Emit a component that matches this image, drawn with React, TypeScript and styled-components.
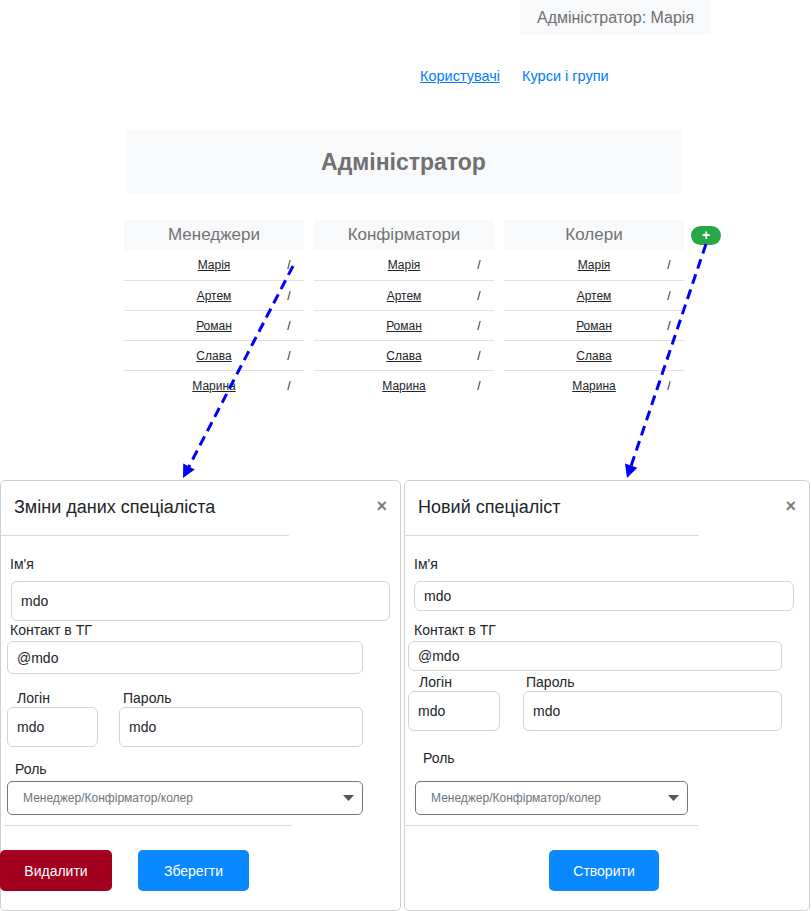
import React from "react";
import styled, { createGlobalStyle } from "styled-components";

const GlobalStyle = createGlobalStyle`
  html, body { margin: 0; padding: 0; background: #fff; }
  body { font-family: "Liberation Sans", Arial, Helvetica, sans-serif; color: #212529; }
  * { box-sizing: border-box; }
`;

const Page = styled.div`
  position: relative;
  width: 811px;
  height: 911px;
  overflow: hidden;
`;

const TopBar = styled.div`
  display: flex;
  justify-content: flex-end;
  padding-right: 100px;
`;

const UserBadge = styled.div`
  width: 191px;
  height: 35px;
  line-height: 35px;
  text-align: center;
  background: #f8f9fa;
  color: #707070;
  font-size: 16px;
`;

const Nav = styled.nav`
  display: flex;
  gap: 22px;
  margin-top: 31px;
  padding-left: 420px;
  font-size: 14.5px;
  line-height: 20px;
`;

const NavLink = styled.a<{ $active?: boolean }>`
  color: #007bff;
  cursor: pointer;
  text-decoration: ${(p) => (p.$active ? "underline" : "none")};
`;

const TitleBox = styled.div`
  margin: 44px 0 0 126px;
  width: 555px;
  height: 64px;
  display: flex;
  align-items: center;
  justify-content: center;
  background: #f8f9fa;
  color: #707070;
  font-size: 23px;
  font-weight: bold;
`;

const Columns = styled.div`
  display: flex;
  align-items: flex-start;
  gap: 10px;
  margin-top: 26px;
  padding-left: 124px;
`;

const Column = styled.div`
  width: 180px;
`;

const ColumnHeader = styled.div`
  height: 30px;
  line-height: 30px;
  text-align: center;
  background: #f8f9fa;
  color: #737373;
  font-size: 17px;
`;

const PersonRow = styled.div`
  display: grid;
  grid-template-columns: 30px 1fr 30px;
  align-items: center;
  height: 30px;
  font-size: 12px;
  color: #212529;
  & + & {
    border-top: 1px solid #dee2e6;
  }
`;

const PersonName = styled.a`
  grid-column: 2;
  text-align: center;
  color: #212529;
  text-decoration: underline;
`;

const Slash = styled.span`
  grid-column: 3;
  text-align: center;
`;

const AddButton = styled.button`
  margin: 6px 0 0 -3px;
  width: 30px;
  height: 19px;
  padding: 0;
  border: none;
  border-radius: 10px;
  background: #28a745;
  color: #fff;
  font-family: inherit;
  font-size: 14px;
  font-weight: bold;
  line-height: 19px;
`;

const ModalsRow = styled.div`
  display: flex;
  gap: 3px;
  margin-top: 80px;
`;

const ModalCard = styled.div<{ $w: number }>`
  width: ${(p) => p.$w}px;
  height: 431px;
  border: 1px solid #cfcfcf;
  border-radius: 5px;
  background: #fff;
  display: flex;
  flex-direction: column;
  align-items: flex-start;
`;

const ModalHeader = styled.div`
  align-self: stretch;
  height: 54px;
  padding: 15px 13px 0 13px;
  display: flex;
  justify-content: space-between;
  align-items: flex-start;
`;

const ModalTitle = styled.h5`
  margin: 0;
  font-size: 18px;
  font-weight: normal;
  line-height: 22px;
  color: #212529;
`;

const CloseButton = styled.button`
  padding: 0;
  border: none;
  background: none;
  font-family: inherit;
  font-size: 18px;
  font-weight: bold;
  line-height: 20px;
  color: #7d7d7d;
`;

const Divider = styled.div<{ $w: number; $mt?: number; $ml?: number }>`
  width: ${(p) => p.$w}px;
  height: 1px;
  margin-top: ${(p) => p.$mt ?? 0}px;
  margin-left: ${(p) => p.$ml ?? 0}px;
  background: #dcdcdc;
`;

const Label = styled.label<{ $mt?: number; $ml?: number }>`
  display: block;
  margin-top: ${(p) => p.$mt ?? 0}px;
  margin-left: ${(p) => p.$ml ?? 0}px;
  font-size: 14px;
  line-height: 16px;
  color: #212529;
`;

const TextInput = styled.input<{ $w?: number; $h: number; $mt?: number; $ml?: number }>`
  display: block;
  width: ${(p) => (p.$w ? `${p.$w}px` : "100%")};
  height: ${(p) => p.$h}px;
  margin-top: ${(p) => p.$mt ?? 0}px;
  margin-left: ${(p) => p.$ml ?? 0}px;
  padding: 0 9px;
  border: 1px solid #ced4da;
  border-radius: 6px;
  font-family: inherit;
  font-size: 14px;
  color: #212529;
  background: #fff;
  outline: none;
`;

const FieldRow = styled.div<{ $mt: number; $ml: number; $gap: number }>`
  display: flex;
  gap: ${(p) => p.$gap}px;
  margin-top: ${(p) => p.$mt}px;
  margin-left: ${(p) => p.$ml}px;
`;

const FieldGroup = styled.div<{ $w: number }>`
  width: ${(p) => p.$w}px;
  display: flex;
  flex-direction: column;
`;

const SelectBox = styled.div<{ $w: number; $mt: number; $ml: number }>`
  width: ${(p) => p.$w}px;
  height: 34px;
  margin-top: ${(p) => p.$mt}px;
  margin-left: ${(p) => p.$ml}px;
  padding: 0 8px 0 15px;
  display: flex;
  align-items: center;
  justify-content: space-between;
  border: 1px solid #767676;
  border-radius: 5px;
  font-size: 12px;
  color: #6c757d;
`;

const Footer = styled.div<{ $mt: number; $ml: number; $gap?: number }>`
  display: flex;
  gap: ${(p) => p.$gap ?? 0}px;
  margin-top: ${(p) => p.$mt}px;
  margin-left: ${(p) => p.$ml}px;
`;

const ActionButton = styled.button<{ $variant: "danger" | "primary"; $w: number }>`
  width: ${(p) => p.$w}px;
  height: 41px;
  border: none;
  border-radius: 5px;
  background: ${(p) => (p.$variant === "danger" ? "#a3001f" : "#0a88ff")};
  color: #fff;
  font-family: inherit;
  font-size: 14px;
`;

const ArrowLayer = styled.svg`
  position: absolute;
  left: 0;
  top: 0;
  width: 811px;
  height: 911px;
  pointer-events: none;
`;

const Caret = () => (
  <svg width="11" height="6" viewBox="0 0 11 6">
    <polygon points="0,0 11,0 5.5,6" fill="#555" />
  </svg>
);

const people = ["Марія", "Артем", "Роман", "Слава", "Марина"];
const groups = ["Менеджери", "Конфірматори", "Колери"];

function Arrow({ x1, y1, x2, y2 }: { x1: number; y1: number; x2: number; y2: number }) {
  const dx = x2 - x1;
  const dy = y2 - y1;
  const len = Math.hypot(dx, dy);
  const ux = dx / len;
  const uy = dy / len;
  const bx = x2 - ux * 13;
  const by = y2 - uy * 13;
  const px = -uy * 6.5;
  const py = ux * 6.5;
  return (
    <g>
      <line x1={x1} y1={y1} x2={bx + ux * 2} y2={by + uy * 2} stroke="#0000ff" strokeWidth={3} strokeDasharray="10 6" />
      <polygon points={`${x2},${y2} ${bx + px},${by + py} ${bx - px},${by - py}`} fill="#0000ff" />
    </g>
  );
}

export default function App() {
  return (
    <Page>
      <GlobalStyle />
      <TopBar>
        <UserBadge>Адміністратор: Марія</UserBadge>
      </TopBar>
      <Nav>
        <NavLink $active>Користувачі</NavLink>
        <NavLink>Курси і групи</NavLink>
      </Nav>
      <TitleBox>Адміністратор</TitleBox>
      <Columns>
        {groups.map((g) => (
          <Column key={g}>
            <ColumnHeader>{g}</ColumnHeader>
            {people.map((p) => (
              <PersonRow key={p}>
                <PersonName>{p}</PersonName>
                <Slash>/</Slash>
              </PersonRow>
            ))}
          </Column>
        ))}
        <AddButton>+</AddButton>
      </Columns>

      <ModalsRow>
        <ModalCard $w={401}>
          <ModalHeader>
            <ModalTitle>Зміни даних спеціаліста</ModalTitle>
            <CloseButton>×</CloseButton>
          </ModalHeader>
          <Divider $w={288} />
          <Label $mt={20} $ml={9}>Ім'я</Label>
          <TextInput $mt={9} $ml={10} $w={379} $h={40} value="mdo" readOnly />
          <Label $mt={1} $ml={9}>Контакт в ТГ</Label>
          <TextInput $mt={3} $ml={6} $w={356} $h={33} value="@mdo" readOnly />
          <FieldRow $mt={16} $ml={6} $gap={21}>
            <FieldGroup $w={91}>
              <Label $ml={10}>Логін</Label>
              <TextInput $mt={1} $h={40} value="mdo" readOnly />
            </FieldGroup>
            <FieldGroup $w={244}>
              <Label $ml={4}>Пароль</Label>
              <TextInput $mt={1} $h={40} value="mdo" readOnly />
            </FieldGroup>
          </FieldRow>
          <Label $mt={14} $ml={14}>Роль</Label>
          <SelectBox $mt={4} $ml={6} $w={356}>
            <span>Менеджер/Конфірматор/колер</span>
            <Caret />
          </SelectBox>
          <Divider $mt={10} $ml={3} $w={288} />
          <Footer $mt={24} $ml={-1} $gap={26}>
            <ActionButton $variant="danger" $w={112}>Видалити</ActionButton>
            <ActionButton $variant="primary" $w={111}>Зберегти</ActionButton>
          </Footer>
        </ModalCard>

        <ModalCard $w={406}>
          <ModalHeader>
            <ModalTitle>Новий спеціаліст</ModalTitle>
            <CloseButton>×</CloseButton>
          </ModalHeader>
          <Divider $w={294} />
          <Label $mt={20} $ml={9}>Ім'я</Label>
          <TextInput $mt={9} $ml={9} $w={380} $h={30} value="mdo" readOnly />
          <Label $mt={11} $ml={9}>Контакт в ТГ</Label>
          <TextInput $mt={3} $ml={3} $w={374} $h={30} value="@mdo" readOnly />
          <FieldRow $mt={3} $ml={3} $gap={23}>
            <FieldGroup $w={92}>
              <Label $ml={11}>Логін</Label>
              <TextInput $mt={1} $h={40} value="mdo" readOnly />
            </FieldGroup>
            <FieldGroup $w={259}>
              <Label $ml={3}>Пароль</Label>
              <TextInput $mt={1} $h={40} value="mdo" readOnly />
            </FieldGroup>
          </FieldRow>
          <Label $mt={19} $ml={18}>Роль</Label>
          <SelectBox $mt={15} $ml={10} $w={273}>
            <span>Менеджер/Конфірматор/колер</span>
            <Caret />
          </SelectBox>
          <Divider $mt={10} $w={294} />
          <Footer $mt={24} $ml={144}>
            <ActionButton $variant="primary" $w={110}>Створити</ActionButton>
          </Footer>
        </ModalCard>
      </ModalsRow>

      <ArrowLayer viewBox="0 0 811 911">
        <Arrow x1={293} y1={266} x2={183} y2={478} />
        <Arrow x1={706} y1={244} x2={627} y2={478} />
      </ArrowLayer>
    </Page>
  );
}
